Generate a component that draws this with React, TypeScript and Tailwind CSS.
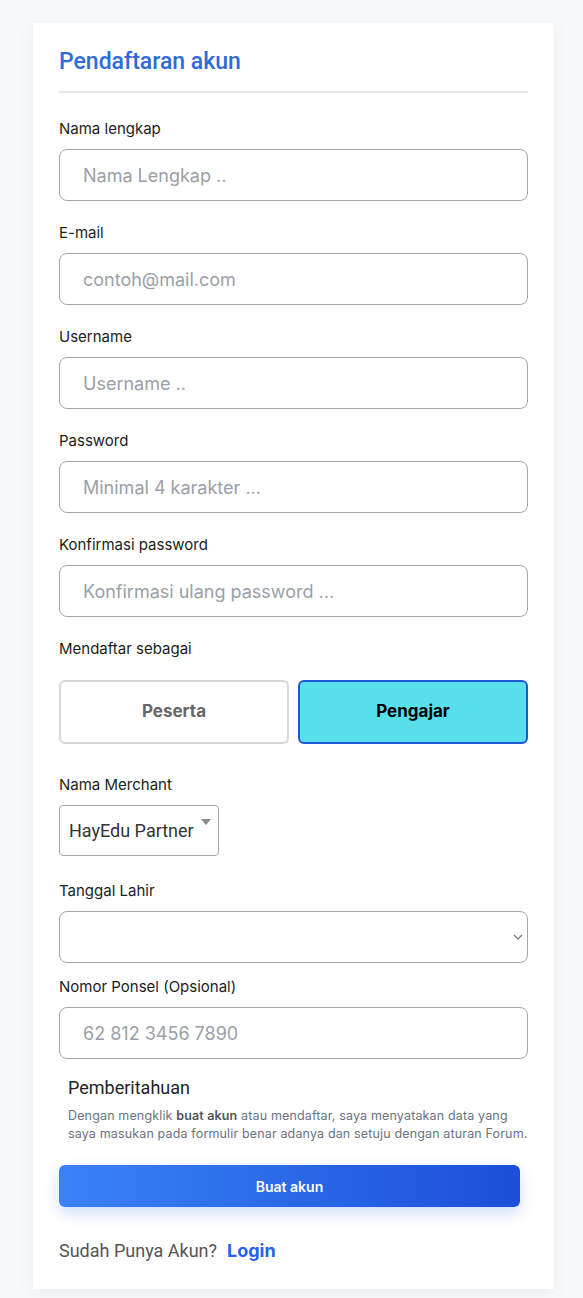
import React from 'react';

const Label = ({ children }: { children: React.ReactNode }) => (
  <label className="block text-[15px] leading-[20px] text-[#1a1d21] mb-[10px]">{children}</label>
);

const TextInput = ({ placeholder }: { placeholder: string }) => (
  <input
    placeholder={placeholder}
    className="w-full h-[52px] rounded-[8px] border border-[#a3a6ab] bg-white px-[23px] text-[18px] text-[#222] placeholder:text-[#9aa0a8] outline-none"
  />
);

export default function App() {
  return (
    <div className="min-h-[1298px] bg-[#f8f9fb] pt-[23px] pb-[10px] font-['Inter',sans-serif]">
      <div className="ml-[33px] w-[521px] bg-white shadow-[0_4px_18px_rgba(0,0,0,0.06)] px-[26px] pt-[24px] pb-[25px]">
        <h1 className="font-['Roboto',sans-serif] text-[23px] leading-[30px] font-medium text-[#2f6bd9]">Pendaftaran akun</h1>
        <div className="h-[2px] bg-[#e6e7e9] mt-[14px] mb-[26px]" />

        <div className="flex flex-col gap-[22px]">
          <div>
            <Label>Nama lengkap</Label>
            <TextInput placeholder="Nama Lengkap .." />
          </div>
          <div>
            <Label>E-mail</Label>
            <TextInput placeholder="contoh@mail.com" />
          </div>
          <div>
            <Label>Username</Label>
            <TextInput placeholder="Username .." />
          </div>
          <div>
            <Label>Password</Label>
            <TextInput placeholder="Minimal 4 karakter ..." />
          </div>
          <div>
            <Label>Konfirmasi password</Label>
            <TextInput placeholder="Konfirmasi ulang password ..." />
          </div>
          <div>
            <Label>Mendaftar sebagai</Label>
            <div className="grid grid-cols-2 gap-[9px] mt-[21px]">
              <button className="h-[64px] rounded-[6px] border-2 border-[#d4d6da] bg-white text-[17px] font-bold text-[#666]">Peserta</button>
              <button className="h-[64px] rounded-[6px] border-2 border-[#1f55d6] bg-[#58dfec] text-[17px] font-bold text-black">Pengajar</button>
            </div>
          </div>
          <div className="mt-[9px]">
            <Label>Nama Merchant</Label>
            <div className="relative w-[160px] h-[51px] rounded-[4px] border border-[#a3a6ab] bg-white flex items-center pl-[9px]">
              <span className="font-['Roboto',sans-serif] text-[18px] text-[#333]">HayEdu Partner</span>
              <svg className="absolute right-[7px] top-[13px]" width="10" height="6" viewBox="0 0 10 6">
                <path d="M0 0h10L5 6z" fill="#8a8a8a" />
              </svg>
            </div>
          </div>
          <div className="mt-[3px]">
            <Label>Tanggal Lahir</Label>
            <div className="relative w-full h-[52px] rounded-[8px] border border-[#a3a6ab] bg-white">
              <svg className="absolute right-[4px] top-[22px]" width="10" height="6" viewBox="0 0 10 6">
                <path d="M1 1l4 4 4-4" fill="none" stroke="#777" strokeWidth="1.2" />
              </svg>
            </div>
          </div>
          <div className="-mt-[8px]">
            <Label>Nomor Ponsel (Opsional)</Label>
            <TextInput placeholder="62 812 3456 7890" />
          </div>
        </div>

        <div className="pl-[9px] mt-[17px]">
          <h2 className="font-['Roboto',sans-serif] text-[18px] leading-[24px] text-[#1f2328]">Pemberitahuan</h2>
          <p className="mt-[7px] text-[12.5px] leading-[18px] tracking-[0.15px] text-[#6b7280]">
            Dengan mengklik <b className="font-semibold text-[#555]">buat akun</b> atau mendaftar, saya menyatakan data yang saya masukan pada formulir benar adanya dan setuju dengan aturan Forum.
          </p>
        </div>

        <button className="mt-[22px] w-[461px] h-[42px] rounded-[6px] bg-gradient-to-r from-[#3b82f6] to-[#1d4ed8] text-white text-[14px] font-semibold shadow-[0_6px_14px_rgba(37,99,235,0.22)]">
          Buat akun
        </button>

        <div className="mt-[30px] flex items-center gap-[10px] text-[18px]">
          <span className="font-['Roboto',sans-serif] text-[#555]">Sudah Punya Akun?</span>
          <a className="font-bold text-[#2563eb]">Login</a>
        </div>
      </div>
    </div>
  );
}
